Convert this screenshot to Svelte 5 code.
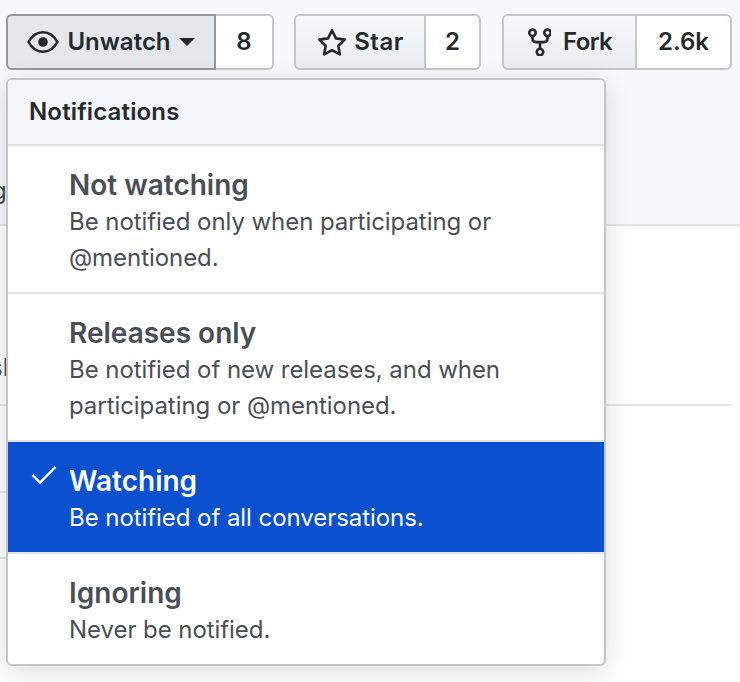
<script>
    const items = [
        { title: 'Not watching', lines: ['Be notified only when participating or', '@mentioned.'] },
        { title: 'Releases only', lines: ['Be notified of new releases, and when', 'participating or @mentioned.'] },
        { title: 'Watching', lines: ['Be notified of all conversations.'], selected: true },
        { title: 'Ignoring', lines: ['Never be notified.'] },
    ];
</script>

<div class="page">
    <header class="repohead">
        <div class="actions">
            <div class="group watch">
                <button class="btn pressed">
                    <svg width="32" height="28" viewBox="0 0 32 28" fill="none" stroke="#24292e" stroke-width="2.6">
                        <path d="M1.6 14C5 7.6 10 4.2 16 4.2S27 7.6 30.4 14C27 20.4 22 23.8 16 23.8S5 20.4 1.6 14Z" />
                        <circle cx="16" cy="14" r="4.8" fill="#24292e" stroke="none" />
                    </svg>
                    Unwatch
                    <span class="caret"></span>
                </button>
                <span class="count">8</span>
            </div>
            <div class="group star">
                <button class="btn">
                    <svg width="30" height="28" viewBox="-1 0 30 28" fill="none" stroke="#24292e" stroke-width="2.6" stroke-linejoin="round">
                        <path d="M15 2.4l3.9 8 8.8 1.2-6.4 6.1 1.6 8.7L15 22.2l-7.9 4.2 1.6-8.7-6.4-6.1 8.8-1.2Z" />
                    </svg>
                    Star
                </button>
                <span class="count">2</span>
            </div>
            <div class="group fork">
                <button class="btn">
                    <svg width="24" height="28" viewBox="-1 0 24 28" fill="none" stroke="#24292e" stroke-width="2.6">
                        <circle cx="4.5" cy="4.8" r="3.2" />
                        <circle cx="19.5" cy="4.8" r="3.2" />
                        <circle cx="12" cy="24" r="3.2" />
                        <path d="M4.5 8v2.5c0 2.4 1.4 3.6 3.6 3.6h7.8c2.2 0 3.6-1.2 3.6-3.6V8M12 14v6.8" />
                    </svg>
                    Fork
                </button>
                <span class="count">2.6k</span>
            </div>
        </div>
        <span class="peek peek-g">g</span>
    </header>

    <div class="row first"><span class="peek peek-s">sl</span></div>
    <div class="row second"></div>
    <div class="row third"></div>

    <div class="menu">
        <div class="menu-title">Notifications</div>
        {#each items as item}
            <div class="item" class:selected={item.selected}>
                {#if item.selected}
                    <svg class="check" width="26" height="20" viewBox="0 0 26 20" fill="none" stroke="#fff" stroke-width="2.3">
                        <path d="M1.5 9l7.5 7.5L24.5 1" />
                    </svg>
                {/if}
                <div class="item-title">{item.title}</div>
                {#each item.lines as line}
                    <div class="item-line">{line}</div>
                {/each}
            </div>
        {/each}
    </div>
</div>

<style>
    :global(body) {
        background: #fff;
        font-family: Inter, "Liberation Sans", sans-serif;
    }

    .page {
        position: relative;
        width: 740px;
        height: 682px;
        overflow: hidden;
    }

    .repohead {
        height: 226px;
        box-sizing: border-box;
        padding: 14px 8px 0 6px;
        background: #f7f8fb;
        border-bottom: 2px solid #e1e4e8;
        position: relative;
    }

    .actions {
        display: flex;
    }

    .group {
        display: flex;
        height: 56px;
    }

    .watch {
        margin-right: 20px;
    }

    .star {
        margin-right: 21px;
    }

    .btn {
        display: flex;
        align-items: center;
        justify-content: center;
        box-sizing: border-box;
        height: 56px;
        padding: 0 0 1px;
        gap: 8px;
        font: 600 24px Inter, "Liberation Sans", sans-serif;
        color: #24292e;
        background: linear-gradient(#f6f8fa, #e9ecef);
        border: 2px solid #c5c7ca;
        border-radius: 6px 0 0 6px;
    }

    .pressed {
        width: 210px;
        background: #e4e7eb;
        border-color: #94979b;
    }

    .star .btn {
        width: 132px;
        letter-spacing: 0.5px;
    }

    .fork .btn {
        width: 135px;
        gap: 12px;
        letter-spacing: -0.6px;
    }

    .caret {
        width: 0;
        height: 0;
        border: 8px solid transparent;
        border-top-color: #24292e;
        border-bottom: 0;
    }

    .count {
        display: flex;
        align-items: center;
        justify-content: center;
        box-sizing: border-box;
        height: 56px;
        padding-bottom: 1px;
        font-size: 24px;
        font-weight: 600;
        color: #24292e;
        background: #fff;
        border: 2px solid #c5c7ca;
        border-left: 0;
        border-radius: 0 6px 6px 0;
    }

    .watch .count {
        width: 58px;
    }

    .star .count {
        width: 55px;
    }

    .fork .count {
        width: 95px;
    }

    .peek {
        position: absolute;
        font-size: 24px;
        color: #444d56;
    }

    .peek-g {
        top: 176px;
        left: -8px;
    }

    .row {
        position: relative;
        border-bottom: 2px solid #e1e4e8;
    }

    .first {
        height: 178px;
        margin-right: 8px;
    }

    .peek-s {
        top: 127px;
        left: -10px;
    }

    .second {
        height: 85px;
        width: 7px;
    }

    .third {
        height: 64px;
        width: 7px;
    }

    .menu {
        position: absolute;
        top: 78px;
        left: 6px;
        width: 600px;
        box-sizing: border-box;
        background: #fff;
        border: 2px solid #c4c5c8;
        border-radius: 6px;
        overflow: hidden;
        box-shadow: 0 6px 24px rgba(0, 0, 0, 0.14);
    }

    .menu-title {
        height: 66px;
        box-sizing: border-box;
        padding-left: 21px;
        font-size: 24px;
        font-weight: 600;
        line-height: 64px;
        letter-spacing: 0.15px;
        color: #24292e;
        background: #f4f6fa;
        border-bottom: 2px solid #dfe0e6;
    }

    .item {
        position: relative;
        padding: 20px 20px 16px 61px;
        border-bottom: 2px solid #e1e4e8;
        color: #4a4f57;
    }

    .item:last-child {
        border-bottom: 0;
    }

    .item-title {
        font-size: 28px;
        font-weight: 600;
        line-height: 38px;
    }

    .item-line {
        font-size: 24px;
        line-height: 36px;
        letter-spacing: -0.06px;
    }

    .selected {
        color: #fff;
        background: #0a50cf;
    }

    .check {
        position: absolute;
        top: 24px;
        left: 23px;
    }
</style>
